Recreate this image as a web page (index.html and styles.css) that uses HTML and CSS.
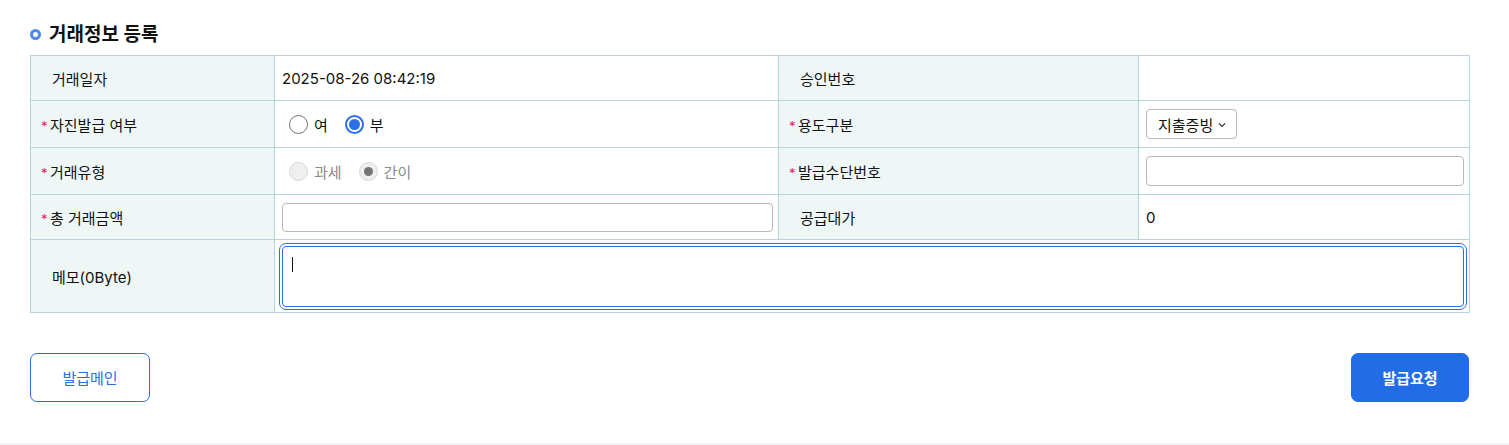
FILE: index.html
```html
<!DOCTYPE html>
<html lang="ko">
<head>
<meta charset="utf-8">
<link rel="stylesheet" href="styles.css">
</head>
<body>
<div class="page">
  <h2 class="title"><span class="dot"></span>거래정보 등록</h2>
  <table class="form">
    <colgroup>
      <col class="c1"><col class="c2"><col class="c3"><col class="c4">
    </colgroup>
    <tr class="r1">
      <th class="plain">거래일자</th>
      <td>2025-08-26 08:42:19</td>
      <th class="plain">승인번호</th>
      <td></td>
    </tr>
    <tr class="r2">
      <th><span class="req">*</span>자진발급 여부</th>
      <td>
        <div class="radios">
          <label class="opt"><span class="radio"></span>여</label>
          <label class="opt"><span class="radio on"></span>부</label>
        </div>
      </td>
      <th><span class="req">*</span>용도구분</th>
      <td>
        <div class="select">지출증빙
          <svg class="chev" width="8" height="6" viewBox="0 0 8 6"><path d="M1 1.5 L4 4.5 L7 1.5" fill="none" stroke="#333" stroke-width="1.2"/></svg>
        </div>
      </td>
    </tr>
    <tr class="r3">
      <th><span class="req">*</span>거래유형</th>
      <td>
        <div class="radios dis">
          <label class="opt"><span class="radio"></span>과세</label>
          <label class="opt"><span class="radio on"></span>간이</label>
        </div>
      </td>
      <th><span class="req">*</span>발급수단번호</th>
      <td><div class="input wide"></div></td>
    </tr>
    <tr class="r4">
      <th><span class="req">*</span>총 거래금액</th>
      <td><div class="input amount"></div></td>
      <th class="plain">공급대가</th>
      <td>0</td>
    </tr>
    <tr class="r5">
      <th class="plain">메모(0Byte)</th>
      <td colspan="3" class="memo-cell">
        <div class="memo"><span class="caret"></span></div>
      </td>
    </tr>
  </table>
  <div class="actions">
    <button class="btn outline">발급메인</button>
    <button class="btn primary">발급요청</button>
  </div>
</div>
<div class="footer-line"></div>
</body>
</html>
```
FILE: styles.css
```css
* { box-sizing: border-box; }
html, body { margin: 0; padding: 0; background: #fff; }
body {
  font-family: Inter, "Noto Sans CJK KR", sans-serif;
  color: #111;
  font-size: 15px;
  height: 445px;
  overflow: hidden;
  position: relative;
}
.page { padding: 15px 40px 0 30px; }
.title {
  margin: 0;
  height: 40px;
  display: flex;
  align-items: center;
  font-size: 19px;
  font-weight: 700;
  color: #111;
  line-height: 1;
  padding-bottom: 2px;
}
.dot {
  width: 11px; height: 11px;
  border: 3px solid #4d8af0;
  border-radius: 50%;
  margin-right: 8px;
  margin-top: 1px;
}
.form {
  width: 1439px;
  border-collapse: collapse;
  table-layout: fixed;
}
.c1 { width: 244px; } .c2 { width: 504px; } .c3 { width: 360px; } .c4 { width: 331px; }
.form th, .form td {
  border: 1px solid #b4d6da;
  padding: 0 7px;
  font-weight: 400;
  text-align: left;
  font-size: 15px;
  vertical-align: middle;
}
.form th { background: #eef7f6; padding-left: 10px; }
.form th.plain { padding-left: 21px; }
.req { color: #e5206a; font-size: 13px; display: inline-block; width: 9px; }
.r1 th, .r1 td { height: 45px; }
.r2 th, .r2 td { height: 47px; }
.r3 th, .r3 td { height: 47px; }
.r4 th, .r4 td { height: 45px; }
.r5 th, .r5 td { height: 73px; }
.radios { display: flex; align-items: center; padding-left: 7px; }
.opt { display: flex; align-items: center; margin-right: 17px; }
.radio {
  width: 19px; height: 19px;
  border: 1px solid #767676;
  border-radius: 50%;
  margin-right: 6px;
  position: relative;
  background: #fff;
}
.radio.on { border: 2px solid #2c6fe6; }
.radio.on::after {
  content: ""; position: absolute;
  left: 2px; top: 2px; width: 11px; height: 11px;
  border-radius: 50%; background: #2c6fe6;
}
.dis .opt { color: #8a8a8a; }
.dis .radio { border: 1px solid #d8d8d8; background: #efefef; }
.dis .radio.on { border: 1px solid #d8d8d8; }
.dis .radio.on::after { background: #757575; left: 4px; top: 4px; width: 9px; height: 9px; }
.select {
  display: inline-flex; align-items: center;
  height: 30px; width: 91px;
  border: 1px solid #b8b8b8; border-radius: 4px;
  padding-left: 11px;
  font-size: 15px;
  white-space: nowrap;
}
.chev { margin-left: 5px; margin-top: 2px; }
.input {
  height: 30px;
  border: 1px solid #b8b8b8; border-radius: 4px;
  background: #fff;
}
.input.wide { width: 318px; }
.input.amount { width: 491px; height: 29px; }
.memo-cell { padding: 4px !important; }
.memo {
  height: 61px;
  margin-left: 3px;
  margin-right: 1px;
  border: 1px solid #2a6de5;
  outline: 1px solid #2a6de5;
  outline-offset: 2px;
  border-radius: 4px;
  padding: 10px 9px;
}
.caret { display: block; width: 1px; height: 15px; background: #111; }
.actions {
  display: flex;
  justify-content: space-between;
  margin-top: 40px;
}
.btn {
  height: 49px;
  border-radius: 7px;
  font-family: Inter, "Noto Sans CJK KR", sans-serif;
  font-size: 15px;
  cursor: pointer;
}
.btn.outline { background: #fff; border: 1px solid #2a6de5; color: #2a6de5; width: 120px; }
.btn.primary { background: #236ce8; border: 1px solid #236ce8; color: #fff; font-weight: 700; width: 118px; }
.footer-line {
  position: absolute; left: 0; right: 0; top: 443px; height: 2px;
  background: #f1f1f5;
}
```
